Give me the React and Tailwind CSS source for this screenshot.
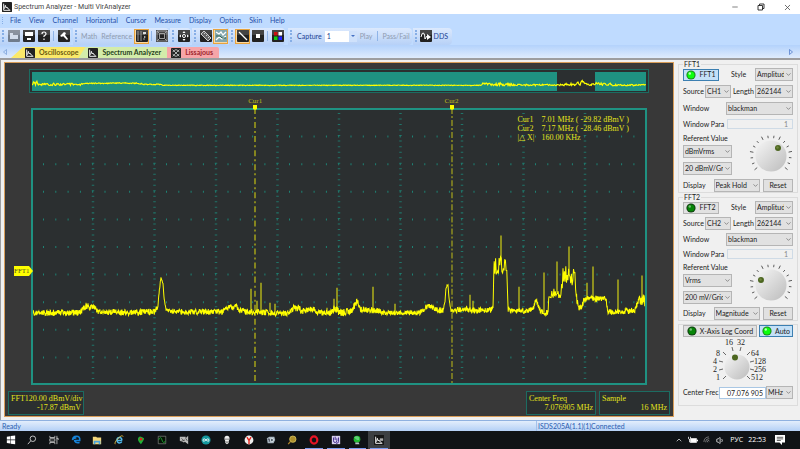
import React, { useState } from 'react';
import { ChevronDown, ChevronUp, Minus, X, Volume1, Wifi } from 'lucide-react';

const MENU = ['File', 'View', 'Channel', 'Horizontal', 'Cursor', 'Measure', 'Display', 'Option', 'Skin', 'Help'];

// Small deterministic noise source so the trace does not change between renders
const createNoise = (seed) => {
  let state = seed;
  return () => {
    state = (state * 16807) % 2147483647;
    return state / 2147483647 - 0.5;
  };
};

// [x, level, noise amplitude] of the spectrum envelope
const ENVELOPE = [
  [0, 204, 5], [49, 204, 5], [53, 199, 5], [57, 197, 5], [59, 199, 5], [62, 197, 4], [67, 203, 4], [80, 204, 5],
  [82, 202, 4], [87, 204, 5], [124, 203, 5], [127, 197, 3], [129, 175, 1], [130, 169, 1], [132, 175, 1],
  [133, 189, 1], [135, 201, 3], [141, 203, 5], [191, 203, 4], [197, 199, 4], [199, 197, 4], [202, 200, 3],
  [205, 196, 4], [208, 202, 5], [219, 203, 5], [256, 205, 5], [262, 200, 6], [267, 199, 6], [273, 203, 5],
  [281, 199, 6], [286, 204, 5], [300, 204, 6], [304, 200, 6], [309, 204, 6], [321, 202, 6], [326, 192, 5],
  [330, 201, 5], [348, 202, 4], [352, 204, 4], [389, 204, 5], [394, 199, 5], [398, 197, 4], [406, 201, 5],
  [412, 202, 4], [414, 192, 3], [415, 179, 2], [417, 176, 2], [418, 189, 2], [420, 202, 5], [436, 200, 6],
  [444, 202, 5], [460, 201, 5], [462, 199, 3], [463, 157, 16], [475, 155, 16], [476, 160, 12], [477, 201, 4],
  [494, 203, 5], [502, 201, 4], [505, 191, 4], [509, 201, 5], [513, 204, 5], [517, 204, 5], [518, 187, 11],
  [522, 182, 11], [525, 189, 11], [530, 184, 13], [532, 167, 16], [544, 167, 16], [545, 182, 8],
  [547, 199, 5], [550, 199, 5], [553, 192, 5], [556, 189, 4], [564, 190, 5], [572, 189, 5], [575, 191, 5],
  [577, 203, 4], [594, 203, 5], [604, 201, 5], [608, 191, 9], [612, 191, 10], [616, 196, 8],
];

// [x, top, bottom] of the narrow carriers
const PEAKS = [
  [55, 194, 200], [118, 200, 204], [220, 180, 203], [226, 192, 203], [230, 174, 203], [239, 194, 203], [244, 195, 203],
  [296, 199, 203], [303, 190, 203], [306, 179, 203], [342, 178, 203], [364, 195, 203], [428, 198, 203], [439, 186, 203],
  [442, 192, 203], [470, 127, 152], [488, 178, 203], [513, 164, 204], [526, 153, 184], [538, 138, 164],
  [556, 174, 190], [562, 158, 190], [587, 171, 203], [611, 167, 191],
];

const buildSpectrum = () => {
  const noise = createNoise(4711);
  const points = [];
  let segment = 0;
  let x = 0;
  while (x <= 615) {
    while (x > ENVELOPE[segment + 1][0]) segment++;
    const [x0, y0, a0] = ENVELOPE[segment];
    const [x1, y1] = ENVELOPE[segment + 1];
    const level = y0 + ((y1 - y0) * (x - x0)) / (x1 - x0);
    points.push(`${x.toFixed(1)},${(level + noise() * a0 * 1.2).toFixed(1)}`);
    // the wide stations are drawn coarser than the noise floor
    x += a0 > 10 ? 0.7 : 0.3;
  }
  return points.join(' ');
};

const buildOverview = () => {
  const noise = createNoise(99);
  const points = [];
  for (let x = 0; x <= 614; x += 0.7) {
    let y = 14 + noise() * 0.6;
    if (x < 50) y = 13 + noise() * 2.5;
    else if (x < 110) y = 12.5 - Math.sin(((x - 50) / 60) * 3.1) + noise();
    else if (x < 130) y = 13 + noise();
    if (x > 66 && x < 105) y = 11.8 + noise();
    if (x < 5) y = 12 + noise() * 6;
    if (x > 450 && x < 480) y = 13 + noise() * 3;
    if (x > 480) y = 13.7 + noise() * 1.6;
    if (x > 534 && x < 580) y = 12.6 + noise() * 3;
    if (x > 545 && x < 552) y = 11 + noise() * 6;
    points.push(`${x.toFixed(1)},${y.toFixed(1)}`);
  }
  return points.join(' ');
};

const SPECTRUM = buildSpectrum();
const OVERVIEW = buildOverview();

/* ---------- Toolbar ---------- */

const Grip = () => <span className="mx-[2px] h-3 border-l-2 border-dotted border-[#86aee6]" />;
const Divider = () => <span className="mx-[2px] h-[10px] w-px bg-[#8fb4e8]" />;

const ToolGroup = ({ children, className = '' }) => (
  <div className={`flex h-[17px] items-center rounded-r-sm bg-gradient-to-b from-[#dce9fd] to-[#b7d1f7] ${className}`}>
    <Grip />
    {children}
  </div>
);

const ToolButton = ({ label, active, faded, children }) => (
  <button
    aria-label={label}
    className={`flex h-[15px] w-[15px] shrink-0 items-center justify-center border ${
      active ? 'border-[#e8a33d] bg-[#fbd9a0]' : 'border-transparent'
    } ${faded ? 'opacity-50' : ''}`}
  >
    <svg viewBox="0 0 12 12" className="h-3 w-3">
      <rect width="12" height="12" rx="1" fill="#222" />
      <rect width="12" height="5" rx="1" fill="#444" />
      {children}
    </svg>
  </button>
);

const SpectrumGlyph = () => (
  <path d="M2 2v8h8M3 8l1-4 1 3 1-1 1 2 2 1" fill="none" stroke="#fff" strokeWidth="1.1" />
);

const AppIcon = () => (
  <svg viewBox="0 0 12 12" className="h-[10px] w-[10px] shrink-0">
    <rect width="12" height="12" rx="1" fill="#222" />
    <SpectrumGlyph />
  </svg>
);

const Toolbar = () => (
  <div className="flex h-[18px] items-center gap-px bg-[#bfdbff] text-[7px] text-[#1c3f94]">
    <ToolGroup>
      <ToolButton label="Open" faded>
        <path d="M2 3h3v2h5v4H2z" fill="#ddd" />
      </ToolButton>
      <ToolButton label="Save">
        <path d="M2 2h8v4H2zM4 8h4v2H4z" fill="#fff" />
      </ToolButton>
      <ToolButton label="Help">
        <path d="M4 4q0-2 2-2t2 2q0 1-2 2v1M6 8.500v1.500" fill="none" stroke="#fff" strokeWidth="1.200" />
      </ToolButton>
      <Divider />
      <ToolButton label="Tools">
        <path d="M2 6l4-4 2 1-1 2 3 4-1 1-4-4-1 1z" fill="#fff" />
      </ToolButton>
    </ToolGroup>
    <ToolGroup className="ml-px">
      <button className="px-[2px] text-[#8f9bb0]">Math</button>
      <button className="px-[2px] text-[#8f9bb0]">Reference</button>
      <ToolButton label="Layout" active>
        <path d="M2 1v10M5 1v10M8 2v3M8 8v2" stroke="#999" strokeWidth="1" />
        <path d="M7 2h3v2H7zM8 6l2 1-2 1z" fill="#ddd" />
      </ToolButton>
      <Divider />
      <ToolButton label="Frame">
        <path d="M1 1h10v10H1zM3.500 3.500h5v5h-5zM1 1l2.500 2.500M11 1L8.500 3.500M1 11l2.500-2.500M11 11L8.500 8.500" fill="none" stroke="#aaa" strokeWidth=".9" />
      </ToolButton>
    </ToolGroup>
    <ToolGroup>
      <ToolButton label="Center">
        <path d="M6 1l1.500 2h-3zM6 11l1.500-2h-3zM1 6l2-1.500v3zM11 6L9 4.500v3z" fill="#fff" />
        <circle cx="6" cy="6" r="1.500" fill="none" stroke="#fff" />
      </ToolButton>
    </ToolGroup>
    <ToolGroup>
      <ToolButton label="Ruler">
        <path d="M1 4l3-3 7 7-3 3zM4 4l1-1M6 6l1-1M8 8l1-1" fill="#666" stroke="#ddd" strokeWidth=".9" />
      </ToolButton>
      <ToolButton label="Waveforms" active>
        <rect width="12" height="12" fill="#82a6ac" />
        <path d="M1 2l3 2 2-2 2 3 3-3M1 10l3-3 3 2 4-3" fill="none" stroke="#fff" strokeWidth="1.300" />
        <path d="M1 6h4l2 2h4" fill="none" stroke="#365" />
      </ToolButton>
    </ToolGroup>
    <ToolGroup>
      <ToolButton label="Line" active>
        <path d="M2 2l8 8" stroke="#fff" strokeWidth="1.200" />
      </ToolButton>
      <ToolButton label="Stop">
        <rect x="4" y="4" width="4" height="4" fill="#fff" />
      </ToolButton>
      <Divider />
      <ToolButton label="Colors">
        <rect x="2" y="2" width="3.500" height="3.500" fill="#c11" />
        <rect x="6.500" y="2" width="3.500" height="3.500" fill="#fff" />
        <rect x="2" y="6.500" width="3.500" height="3.500" fill="#1c1" />
        <rect x="6.500" y="6.500" width="3.500" height="3.500" fill="#22f" />
      </ToolButton>
    </ToolGroup>
    <ToolGroup className="ml-[2px]">
      <label htmlFor="capture" className="px-[3px]">Capture</label>
      <div className="relative">
        <select id="capture" className="h-[11px] w-8 appearance-none bg-white pl-[2px] text-[#1c3f94]">
          <option>1</option>
        </select>
        <span className="pointer-events-none absolute inset-y-0 right-0 flex w-2 items-center justify-center bg-[#cfe1fb]">
          <svg viewBox="0 0 4 2" className="h-[2px] w-1"><path d="M0 0h4L2 2z" fill="#4571c4" /></svg>
        </span>
      </div>
      <button className="mx-[3px] text-[#8f9bb0]">Play</button>
      <Divider />
      <button className="px-[2px] text-[#8f9bb0]">Pass/Fail</button>
    </ToolGroup>
    <ToolGroup className="pr-1">
      <ToolButton label="DDS output">
        <path d="M1 7q1-5 2.500-4T5 9l2-3" fill="none" stroke="#fff" />
        <path d="M7 4l4 3-4 3z" fill="#fff" />
      </ToolButton>
      <button>DDS</button>
    </ToolGroup>
  </div>
);

/* ---------- Oscilloscope screen ---------- */

const verticals = [1, 2, 3, 4, 5, 6, 7, 8, 9];

const Plot = () => (
  <svg viewBox="2 2 612 272" preserveAspectRatio="none" className="absolute inset-0 h-full w-full">
    {verticals.map((n) => (
      <g key={n} stroke="#1d8c7c">
        <line x1={n * 61.5 + 0.5} x2={n * 61.5 + 0.5} y1="5" y2="272" strokeWidth="2.500" strokeDasharray="1 4.500" opacity=".75" />
        <line x1="12" x2="610" y1={n * 27.5 + 1} y2={n * 27.5 + 1} strokeWidth="2" strokeDasharray="1 11.300" opacity=".9" />
      </g>
    ))}
    <line x1="224" x2="224" y1="0" y2="276" stroke="#85851f" strokeWidth="2" strokeDasharray="6 3 2 3" />
    <line x1="421" x2="421" y1="0" y2="276" stroke="#a6a61d" strokeWidth="1.200" strokeDasharray="6 2 2 2" />
    {PEAKS.map(([x, top, bottom]) => (
      <line key={x} x1={x} x2={x} y1={top} y2={bottom} stroke="#d0d016" strokeWidth="1.200" />
    ))}
    <polyline points={SPECTRUM} fill="none" stroke="#ff0" strokeWidth="1" />
  </svg>
);

const CursorTag = ({ name, left }) => (
  <div className="absolute bottom-full flex -translate-x-1/2 flex-col items-center" style={{ left }}>
    <span className="text-[7px] leading-[8px] text-[#bdbd18]">{name}</span>
    <svg viewBox="0 0 4 5" className="h-[5px] w-1"><path d="M0 0h4v4L2 5 0 4z" fill="#ff0" /></svg>
  </div>
);

const Readout = ({ title, value, className }) => (
  <div className={`border border-[#1c6c62] bg-[#2b2f30] px-[2px] pt-[2px] leading-[9px] ${className}`}>
    <div className="flex justify-between whitespace-nowrap">{title}</div>
    <div className="text-right">{value}</div>
  </div>
);

const Scope = () => (
  <section className="flex min-w-0 flex-1 flex-col border border-[#d99d58] bg-[#383838] pt-[6px] font-['Liberation_Serif',serif] text-[8px] text-[#e3e31c]">
    <div className="mx-6 h-6 border border-[#1c6c62] bg-[#2b2f30] p-[2px]">
      <svg viewBox="0 0 614 20" preserveAspectRatio="none" className="h-[19px] w-full">
        <rect width="614" height="20" fill="#1f9282" />
        <rect x="525" width="38" height="20" fill="#2b2f30" />
        <polyline points={OVERVIEW} fill="none" stroke="#ff0" strokeWidth="1.200" />
      </svg>
    </div>

    <div className="relative mx-[26px] mt-[15px] flex-1 border-2 border-[#1f9282] bg-[#2b2f30]">
      <Plot />
      <CursorTag name="Cur1" left="36.3%" />
      <CursorTag name="Cur2" left="68.4%" />
      <div className="absolute top-[58.8%] right-full -translate-y-1/2">
        <div className="relative h-[10px] w-[19px]">
          <svg viewBox="0 0 19 10" className="absolute inset-0 h-full w-full"><path d="M0 0h15l4 5-4 5H0z" fill="#ff0" /></svg>
          <span className="relative block text-[7px] leading-[10px] text-[#55551a]">FFT1</span>
        </div>
      </div>
      <table className="absolute top-[5px] right-4 leading-[9px] whitespace-nowrap">
        <tbody>
          <tr><td className="pr-2">Cur1</td><td>7.01 MHz ( -29.82 dBmV )</td></tr>
          <tr><td className="pr-2">Cur2</td><td>7.17 MHz ( -28.46 dBmV )</td></tr>
          <tr><td>|△ X|</td><td>160.00 KHz</td></tr>
        </tbody>
      </table>
    </div>

    <div className="mt-[6px] flex h-[25px] gap-[3px] px-[3px] pb-px">
      <Readout className="w-[76px]" title={<><span>FFT1</span><span>20.00 dBmV/div</span></>} value="-17.87 dBmV" />
      <Readout className="ml-auto w-[70px]" title="Center Freq" value="7.076905 MHz" />
      <Readout className="w-[71px]" title="Sample" value="16 MHz" />
    </div>
  </section>
);

/* ---------- Side panel ---------- */

const Select = ({ id, label, value, className }) => (
  <div className={`relative shrink-0 ${className}`}>
    <select id={id} aria-label={label} className="block h-[13px] w-full appearance-none overflow-hidden border border-[#b5b5b5] bg-[#e1e1e1] pr-2 pl-px text-clip whitespace-nowrap">
      <option>{value}</option>
    </select>
    <ChevronDown className="pointer-events-none absolute top-[3px] right-px h-[7px] w-[7px] text-[#555]" />
  </div>
);

const Led = ({ on }) => (
  <svg viewBox="0 0 10 10" className="h-[10px] w-[10px] shrink-0">
    <circle cx="5" cy="5" r="4.600" fill={on ? '#1c8a1c' : '#123f12'} />
    <circle cx="5" cy="5" r="3.500" fill={on ? '#0cff0c' : '#078507'} />
    <circle cx="3.800" cy="3.500" r="1.200" fill={on ? '#b8ffb8' : '#77bb77'} />
  </svg>
);

const LedButton = ({ on, className, children, onClick }) => (
  <button
    onClick={onClick}
    aria-pressed={on}
    className={`flex h-[12px] items-center justify-center gap-[3px] border whitespace-nowrap ${
      on ? 'border-[#3c7fb1] bg-[#c4e0f7]' : 'border-[#b5b5b5] bg-[#e1e1e1]'
    } ${className}`}
  >
    <Led on={on} />
    {children}
  </button>
);

const KNOB_TICKS = Array.from({ length: 16 }, (_, i) => -130 + i * 17.3);

const Knob = ({ id, dotX, dotY }) => (
  <svg viewBox="0 0 44 38" className="h-[38px] w-11">
    <defs>
      <linearGradient id={id} x1="0" y1="0" x2="1" y2="1">
        <stop offset="0" stopColor="#f6f6f6" />
        <stop offset="1" stopColor="#bcbcbc" />
      </linearGradient>
    </defs>
    {KNOB_TICKS.map((angle, i) => (
      <line key={angle} x1="22" x2="22" y1={i % 3 === 0 ? 0.5 : 1.5} y2="4" stroke="#444" strokeWidth=".8" transform={`rotate(${angle} 22 22)`} />
    ))}
    <circle cx="22" cy="22" r="15.500" fill={`url(#${id})`} />
    <circle cx={22 + dotX} cy={22 + dotY} r="3" fill="#4c6620" />
    <circle cx={21.5 + dotX} cy={21.5 + dotY} r="1.200" fill="#71873e" />
  </svg>
);

const ChannelGroup = ({ name, source, unit, scale, display, dot, className }) => {
  const [enabled, setEnabled] = useState(name === 'FFT1');
  const id = name.toLowerCase();

  return (
    <fieldset className="min-w-0 border border-[#dcdcdc] px-1">
      <legend className="-mb-px px-px leading-[8px]">{name}</legend>
      <div className={`flex flex-col ${className}`}>
        <div className="flex items-center">
          <LedButton on={enabled} onClick={() => setEnabled(!enabled)} className="w-9">{name}</LedButton>
          <label htmlFor={`${id}-style`} className="ml-3">Style</label>
          <Select id={`${id}-style`} value="Amplitud" className="ml-auto w-[38px]" />
        </div>
        <div className="flex items-center">
          <label htmlFor={`${id}-source`}>Source</label>
          <Select id={`${id}-source`} value={source} className="ml-auto w-[26px]" />
          <label htmlFor={`${id}-length`} className="ml-[2px] w-[22px]">Length</label>
          <Select id={`${id}-length`} value="262144" className="w-[38px]" />
        </div>
        <div className="flex items-center justify-between">
          <label htmlFor={`${id}-window`}>Window</label>
          <Select id={`${id}-window`} value="blackman" className="w-[67px]" />
        </div>
        <div className="flex items-center justify-between">
          <label htmlFor={`${id}-para`}>Window Para</label>
          <input id={`${id}-para`} defaultValue="1" className="h-[10px] w-[66px] border border-[#cfdbe6] bg-[#f0f0f0] pr-1 text-right text-[#888]" />
        </div>
        <div className="flex justify-between">
          <div className="flex flex-col">
            <span className="leading-[10px] whitespace-nowrap">Referent Value</span>
            <Select label={`${name} unit`} value={unit} className="mt-[2px] w-[49px]" />
            <Select label={`${name} scale`} value={scale} className="mt-1 w-[49px]" />
          </div>
          <div className="-ml-2 flex items-end pb-[3px]">
            <Knob id={`${id}-knob`} dotX={dot[0]} dotY={dot[1]} />
          </div>
        </div>
        <div className="flex items-center justify-between">
          <label htmlFor={`${id}-display`} className="w-[27px]">Display</label>
          <Select id={`${id}-display`} value={display} className="w-[46px]" />
          <button className="h-[13px] w-[30px] border border-[#b5b5b5] bg-[#e1e1e1]">Reset</button>
        </div>
      </div>
    </fieldset>
  );
};

const DIAL_LABELS = [
  ['16', 25, 7, 'middle'], ['32', 37, 7, 'middle'], ['8', 16, 18, 'end'], ['4', 13, 26, 'end'], ['2', 13, 34, 'end'], ['1', 16, 42, 'end'],
  ['64', 47, 18, 'start'], ['128', 50, 26, 'start'], ['256', 50, 34, 'start'], ['512', 47, 42, 'start'],
];

const DIAL_TICKS = [
  'M28 9l1 4', 'M37 9l-1 4', 'M19 14l3 3', 'M15 23l4 1', 'M15 32l4-1', 'M19 41l3-3',
  'M46 14l-3 3', 'M50 23l-4 1', 'M50 32l-4-1', 'M46 41l-3-3',
];

const RateDial = () => (
  <svg viewBox="0 0 68 46" className="mx-auto mt-px h-[46px] w-[68px]">
    <path d={DIAL_TICKS.join('')} stroke="#444" strokeWidth=".8" />
    <circle cx="33" cy="29" r="12.500" fill="url(#fft1-knob)" />
    <circle cx="31" cy="19.500" r="3" fill="#4c6620" />
    {DIAL_LABELS.map(([text, x, y, anchor]) => (
      <text key={text} x={x} y={y} textAnchor={anchor} className="fill-[#222] font-['Liberation_Serif',serif] text-[8px]">{text}</text>
    ))}
  </svg>
);

const SidePanel = () => {
  const [logCoord, setLogCoord] = useState(false);
  const [auto, setAuto] = useState(true);

  return (
    <aside className="flex w-[120px] shrink-0 flex-col text-[7px] leading-[9px] text-[#222]">
      <ChannelGroup className="gap-1 pt-px" name="FFT1" source="CH1" unit="dBmVrms" scale="20 dBmV/Grid" display="Peak Hold" dot={[7, -8]} />
      <ChannelGroup className="gap-[3px] pt-px" name="FFT2" source="CH2" unit="Vrms" scale="200 mV/Grid" display="Magnitude" dot={[-10, -5]} />
      <div className="mt-[3px] border border-[#dcdcdc] px-1 pb-[6px]">
        <div className="flex justify-between">
          <LedButton on={logCoord} onClick={() => setLogCoord(!logCoord)} className="w-[74px]">X-Axis Log Coord</LedButton>
          <LedButton on={auto} onClick={() => setAuto(!auto)} className="w-[34px]">Auto</LedButton>
        </div>
        <RateDial />
        <div className="mt-[2px] flex items-center">
          <label htmlFor="center-freq" className="w-9 whitespace-nowrap">Center Frec</label>
          <input id="center-freq" defaultValue="07.076 905" className="h-3 min-w-0 flex-1 border border-[#a9c7e4] bg-white pr-[2px] text-right" />
          <Select label="Frequency unit" value="MHz" className="w-[27px]" />
        </div>
      </div>
    </aside>
  );
};

/* ---------- Taskbar ---------- */

const TASKS = [
  { name: 'Start', icon: <path d="M1 2l4-.6v4.100H1zM5.600 1.300L11 .6v4.900H5.600zM1 6.200h4v4.100L1 9.700zM5.600 6.200H11v5l-5.400-.7z" fill="#fff" /> },
  { name: 'Search', icon: <g fill="none" stroke="#ddd"><circle cx="7" cy="4.500" r="3.300" /><path d="M4.500 7L1 11" /></g> },
  { name: 'Task View', icon: <path d="M1 1v2h6V1M1 11V9h6v2M1 4.500h6v3H1zM9.500 1v10M9 4h2v2" fill="none" stroke="#ddd" strokeWidth=".9" /> },
  { name: 'Edge', icon: <path d="M2 6q0-4.500 4.500-4.500T10.500 6.500H4.500M1.500 6Q3 3 6.500 3.500M4.300 6q0 4 6 3" fill="none" stroke="#1683d8" strokeWidth="1.900" /> },
  { name: 'Explorer', icon: <><path d="M1 2h4l1 1h5v8H1z" fill="#f4d67a" /><path d="M2 7h8v4H8V9H4v2H2z" fill="#48a5e0" /></> },
  { name: 'Internet Explorer', icon: <><path d="M9.500 6.500H3.500q0-3.500 3-3.500t3 3.500M3.500 6.500q.5 3 3 3T9.300 8" fill="none" stroke="#50b9ed" strokeWidth="1.700" /><path d="M1.500 11Q0 9 5 4t6-2" fill="none" stroke="#f1c843" /></> },
  { name: 'Maps', icon: <><path d="M6 11Q1.500 7 2.500 4T6 2t3.500 2T6 11" fill="#20b336" /><circle cx="6" cy="5" r="1.700" fill="#d42b20" /></> },
  { name: 'Signal', icon: <><path d="M1.500 1.500h9v9h-9z" fill="#051105" stroke="#999" strokeWidth=".7" /><path d="M2 6Q4 0 6 6t4 1" fill="none" stroke="#1faa32" /></> },
  { name: 'Radio', icon: <><path d="M1 2h7v2l3-3v10L7 8l-1 1-5-2z" fill="#bbb" /><path d="M3 4l3 3M8 4l2 3M2 8l5-2" stroke="#444" /></> },
  { name: 'Arduino', icon: <><circle cx="6" cy="6" r="5.500" fill="#14989e" /><path d="M6 6Q3 3 2.500 6T6 6q3-3 3.500 0T6 6" fill="none" stroke="#fff" /></> },
  { name: 'Skull', icon: <><path d="M6 .8q3.500 0 3 4.200L8 7.500v2L6 11.200 4 9.500v-2L3 5Q2.500.8 6 .8" fill="#eee" /><path d="M4 5h1.500M6.500 5H8M5 8.500h2" stroke="#222" /></> },
  { name: 'Yandex', icon: <><circle cx="6" cy="6" r="5.300" fill="#eee" /><path d="M3.500 2.500L6 6.500l2.500-4M6 6v5" fill="none" stroke="#e32119" strokeWidth="1.600" /></> },
  { name: 'Camera', icon: <><path d="M1 4l3-2h6l1 4-2 4H2z" fill="#aab7c2" /><circle cx="7" cy="6" r="2" fill="#56636f" stroke="#e5edf2" /><path d="M2 5h2v3" stroke="#334" fill="none" /></> },
  { name: 'Magnifier', icon: <><circle cx="7" cy="5" r="3.800" fill="#ad8f2d" stroke="#d6c15c" /><path d="M4 8l-2.500 3" stroke="#b38428" strokeWidth="1.500" /></> },
  { name: 'Opera', open: true, icon: <ellipse cx="6" cy="6" rx="4" ry="4.400" fill="none" stroke="#e51425" strokeWidth="2.600" /> },
  { name: 'Viber', open: true, icon: <><path d="M1 1h10v10H1z" fill="#d9d2ef" /><path d="M3 3v4q0 2 2 2t2-2V4M9 3v5q0 2-3 2M5 2v4" fill="none" stroke="#4a3593" strokeWidth="1.200" /></> },
  { name: 'Network', open: true, icon: <><circle cx="6" cy="5" r="4" fill="#21ba31" /><path d="M2.500 3q3-3 6 0v3H6z" fill="#a1e6c2" opacity=".5" /><path d="M4 9h4l1 2H4z" fill="#b8c4c8" /></> },
  { name: 'Spectrum Analyzer', open: true, active: true, icon: <><path d="M0 0h12v12H0z" fill="#171717" /><SpectrumGlyph /><path d="M7 4h4v3H7z" fill="#aaa" /></> },
];

const Taskbar = () => (
  <footer className="flex h-[18px] items-center justify-between bg-[#101316] text-[7px] text-white">
    <nav className="grid h-full w-[390px] grid-cols-[repeat(18,minmax(0,1fr))]">
      {TASKS.map(({ name, icon, open, active }) => (
        <button key={name} aria-label={name} className={`relative flex items-center justify-center ${active ? 'bg-[#3c3f42]' : ''}`}>
          <svg viewBox="0 0 12 12" className="h-[10px] w-[10px]">{icon}</svg>
          {open && <span className="absolute inset-x-[2px] bottom-0 h-px bg-[#7c9cf0]" />}
        </button>
      ))}
    </nav>
    <div className="flex items-center gap-[5px] pr-[15px]">
      <ChevronUp className="h-2 w-2" />
      <svg viewBox="0 0 10 8" className="h-2 w-[10px]">
        <path d="M2.500 2.500h6v4h-6zM9 4h1v1H9z" fill="#fff" stroke="#fff" strokeWidth=".6" />
        <path d="M.5.8v2q1 1.200 2 0v-2M1.500 3v3h2" fill="none" stroke="#ddd" strokeWidth=".9" />
      </svg>
      <Wifi className="h-2 w-2 -rotate-45 text-[#999]" />
      <Volume1 className="h-[9px] w-[9px]" />
      <span className="font-['Open_Sans','Noto_Sans',sans-serif]">РУС</span>
      <span className="font-['Open_Sans','Noto_Sans',sans-serif]">22:53</span>
      <svg viewBox="0 0 10 10" className="ml-1 h-[10px] w-[10px]">
        <path d="M0 0h10v7.500H7V10L4.500 7.500H0z" fill="#fff" />
        <path d="M1.800 2.300h6.400M1.800 3.900h6.400M1.800 5.500h4" stroke="#222" strokeWidth=".7" />
      </svg>
    </div>
  </footer>
);

/* ---------- Window ---------- */

const App = () => (
  <div className="flex h-screen flex-col bg-[#f0f0f0] font-[Lato,'Noto_Sans',sans-serif]">
    <header className="flex h-[14px] items-center bg-white px-[2px] font-[Roboto,sans-serif] text-[7px] text-[#444]">
      <AppIcon />
      <h1 className="ml-[2px]">Spectrum Analyzer - Multi VirAnalyzer</h1>
      <div className="ml-auto flex items-center gap-[18px] pr-[6px]">
        <button aria-label="Minimize"><Minus className="h-2 w-2" /></button>
        <button aria-label="Restore">
          <svg viewBox="0 0 8 8" className="h-2 w-2"><path d="M1 2.500h4.500V7H1zM2.500 2.500V1H7v4.500H5.500" fill="none" stroke="#222" strokeWidth=".9" /></svg>
        </button>
        <button aria-label="Close"><X className="h-[9px] w-[9px]" /></button>
      </div>
    </header>

    <nav className="flex h-[13px] items-center gap-2 bg-[#bfdbff] text-[7px] text-[#1f4fa8]">
      <span className="-mr-px ml-[2px] h-[7px] border-l border-dotted border-[#86aee6]" />
      {MENU.map((item) => (
        <button key={item}>{item}</button>
      ))}
    </nav>

    <Toolbar />

    <div role="tablist" className="flex h-[15px] shrink-0 border-b-2 border-[#9d9d9f] bg-gradient-to-b from-[#b3d2fc] to-[#dfebfc] pt-[2px] text-[7px] font-bold">
      <svg viewBox="0 0 4 6" className="mt-[2px] ml-[3px] h-[6px] w-1"><path d="M3.500.5v5L.5 3z" fill="none" stroke="#7199d6" strokeWidth=".7" /></svg>
      <button role="tab" className="ml-1 flex items-center gap-1 bg-[#fbe96a] pr-2 pl-[14px] text-[#6b5a10] [clip-path:polygon(12px_0,100%_0,100%_100%,0_100%)]">
        <AppIcon />Oscilloscope
      </button>
      <button role="tab" aria-selected="true" className="-ml-[8px] flex items-center gap-1 bg-[#d4ecaa] pr-[6px] pl-[10px] text-[#24401a] [clip-path:polygon(7px_0,100%_0,100%_100%,0_100%)]">
        <AppIcon />Spectrum Analyzer
      </button>
      <button role="tab" className="flex items-center gap-1 rounded-tr-xs bg-[#f7a5a8] px-1 pr-[6px] text-[#a0262c]">
        <svg viewBox="0 0 12 12" className="h-[10px] w-[10px]">
          <rect width="12" height="12" rx="1" fill="#222" />
          <path d="M2 2l8 8M10 2l-8 8M2 5q4-6 8 0M2 7q4 6 8 0" fill="none" stroke="#ddd" strokeWidth=".9" />
        </svg>
        Lissajous
      </button>
      <svg viewBox="0 0 4 6" className="mt-[2px] mr-[7px] ml-auto h-[6px] w-1"><path d="M.5.5v5l3-2.500z" fill="none" stroke="#4571c4" strokeWidth=".7" /></svg>
    </div>

    <main className="flex min-h-0 flex-1 gap-1 border-l border-[#9d9d9f] pr-[2px] pl-[3px]">
      <div className="flex min-w-0 flex-1 pt-[2px] pb-[3px]">
        <Scope />
      </div>
      <SidePanel />
    </main>

    <div className="flex h-[11px] items-center border-t border-[#8fb1e0] bg-gradient-to-b from-[#e3eefc] to-[#b4d0f6] text-[7px] text-[#2a5db0]">
      <span className="w-[67%] pl-[2px]">Ready</span>
      <span className="border-l border-[#a3c1ec] pl-px">ISDS205A(1.1)(1)Connected</span>
    </div>

    <Taskbar />
  </div>
);

export default App;
